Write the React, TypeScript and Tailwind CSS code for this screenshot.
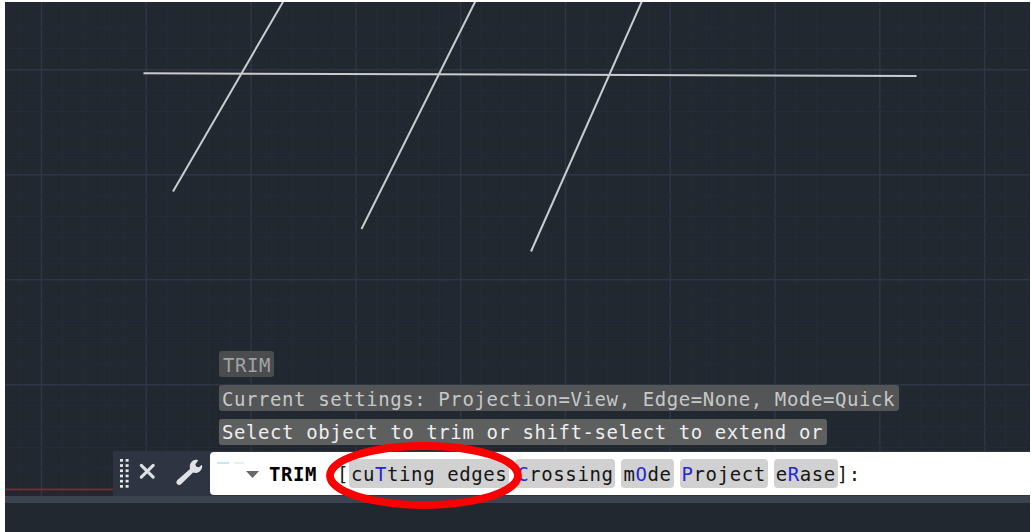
import React from "react";

const columns = Array.from({ length: 50 }, (_, i) => i);
const rows = Array.from({ length: 24 }, (_, i) => i);

const Drawing = () => {
  return (
    <svg
      className="absolute left-0 top-0"
      width="1025"
      height="494"
      viewBox="5 2 1025 494"
      fill="none"
    >
      {columns.map((i) => (
        <rect
          key={`c${i}`}
          x={19.7 + i * 20.96}
          y="2"
          width={i % 5 === 1 ? 1.6 : 1.2}
          height="494"
          fill={i % 5 === 1 ? "#2e3544" : "#252c37"}
        />
      ))}
      {rows.map((i) => (
        <rect
          key={`r${i}`}
          x="5"
          y={5.9 + i * 21}
          width="1025"
          height={i % 5 === 3 ? 1.6 : 1.2}
          fill={i % 5 === 3 ? "#2e3544" : "#252c37"}
        />
      ))}
      <path d="M5 489.3H120" stroke="#82252e" strokeWidth="1.8" />
      <g stroke="#c9cdd0" strokeWidth="2">
        <path d="M143.5 73.3L916.5 76" />
        <path d="M283.5 1L173 191.5" />
        <path d="M475.5 1L361.5 229" />
        <path d="M642 1L531 251.5" />
      </g>
    </svg>
  );
};

const Grip = () => (
  <svg width="9" height="30" viewBox="0 0 9 30" fill="#e4e6e8">
    {[0, 5.2, 10.4, 15.6, 20.8, 26].map((y) => (
      <React.Fragment key={y}>
        <rect x="0" y={y} width="3" height="2.7" />
        <rect x="5.6" y={y} width="3" height="2.7" />
      </React.Fragment>
    ))}
  </svg>
);

const Close = () => (
  <svg width="17" height="17" viewBox="0 0 17 17">
    <path
      d="M2.3 2.3L14.2 14.2M14.2 2.3L2.3 14.2"
      stroke="#dde0e2"
      strokeWidth="3.1"
      strokeLinecap="round"
    />
  </svg>
);

const Wrench = () => (
  <svg width="27" height="27" viewBox="0 0 27 27" fill="#e0e2e3">
    <path d="M1.2 21.2L14 9.9C13.2 6 14.8 2.3 18.5 1.1C20.2 .6 21.8 .8 22.2 1.6L19.3 5.2L20.4 7.8L23 8.3L25.4 6C26.5 6.3 26.4 8.2 25.6 10C24.4 12.5 22.6 13.6 20.2 13.9C18.9 14 17.9 13.8 17.1 13.5L5.3 25.1C4 26.4 2.2 26.3 1.1 25.1C.1 24 .1 22.3 1.2 21.2Z" />
  </svg>
);

const Option = ({ before = "", hot, after }: { before?: string; hot: string; after: string }) => (
  <span className="h-[29px] rounded-[4px] bg-[#d1d1d1] px-[2px] leading-[31px]">
    {before}
    <span className="text-[#2525dc]">{hot}</span>
    {after}
  </span>
);

const App = () => {
  return (
    <div className="h-[532px] w-[1031px] bg-white pl-[5px] pr-px pt-[2px]">
      <div className="relative flex h-[530px] flex-col overflow-hidden bg-[#222830] font-['DejaVu_Sans_Mono',monospace] text-[19px] tracking-[0.58px] whitespace-pre">
        <Drawing />

        <div className="relative flex h-[449px] flex-col items-start justify-end gap-2 pb-[6px] pl-[214px]">
          <p className="h-[26px] rounded-[3px] bg-[#4a4c4e] pl-[4px] pr-[3px] leading-[28px] text-[#a1a3a4]">
            TRIM
          </p>
          <p className="h-[26px] rounded-[3px] bg-[#535556] pl-[3px] pr-[4px] leading-[28px] text-[#c7c8c8]">
            Current settings: Projection=View, Edge=None, Mode=Quick
          </p>
          <p className="h-[26px] rounded-[3px] bg-[#5e6060] pl-[3px] pr-[4px] leading-[27px] text-[#eeeeee]">
            Select object to trim or shift-select to extend or
          </p>
        </div>

        <div className="relative ml-[108px] flex h-[45px] bg-[#2e3441]">
          <div className="flex w-[97px] pl-[7px]">
            <div className="pt-[8px]">
              <Grip />
            </div>
            <div className="pl-[10px] pt-[12px]">
              <Close />
            </div>
            <div className="pl-[20px] pt-[8px]">
              <Wrench />
            </div>
          </div>
          <div className="mt-px flex h-[43px] flex-1 items-start rounded-l-[4px] bg-white pt-[7px] leading-[31px] text-[#161616]">
            <div className="flex w-[36px] gap-[5px] pl-[7px] pt-[3px]">
              <span className="h-[2px] w-3 bg-[#cbe7f0]" />
              <span className="h-[2px] w-[10px] bg-[#e8eff1]" />
            </div>
            <svg className="mt-[12px]" width="13" height="7" viewBox="0 0 13 7">
              <path d="M0 0H13L6.5 7Z" fill="#686868" />
            </svg>
            <span className="w-[78px] pl-[10px] font-bold text-black">TRIM</span>
            <span className="w-[12px]">[</span>
            <div className="flex gap-[6px]">
              <Option before="cu" hot="T" after="ting edges" />
              <Option hot="C" after="rossing" />
              <Option before="m" hot="O" after="de" />
              <Option hot="P" after="roject" />
              <Option before="e" hot="R" after="ase" />
            </div>
            <span className="-ml-px">]:</span>
          </div>
        </div>

        <div className="relative h-[7px] bg-[#3b4250]" />

        <svg
          className="absolute left-[319px] top-[438px]"
          width="200"
          height="72"
          viewBox="324 440 200 72"
        >
          <ellipse
            cx="424"
            cy="475.5"
            rx="94"
            ry="29.5"
            fill="none"
            stroke="#fb0000"
            strokeWidth="7.8"
          />
        </svg>
      </div>
    </div>
  );
};

export default App;
